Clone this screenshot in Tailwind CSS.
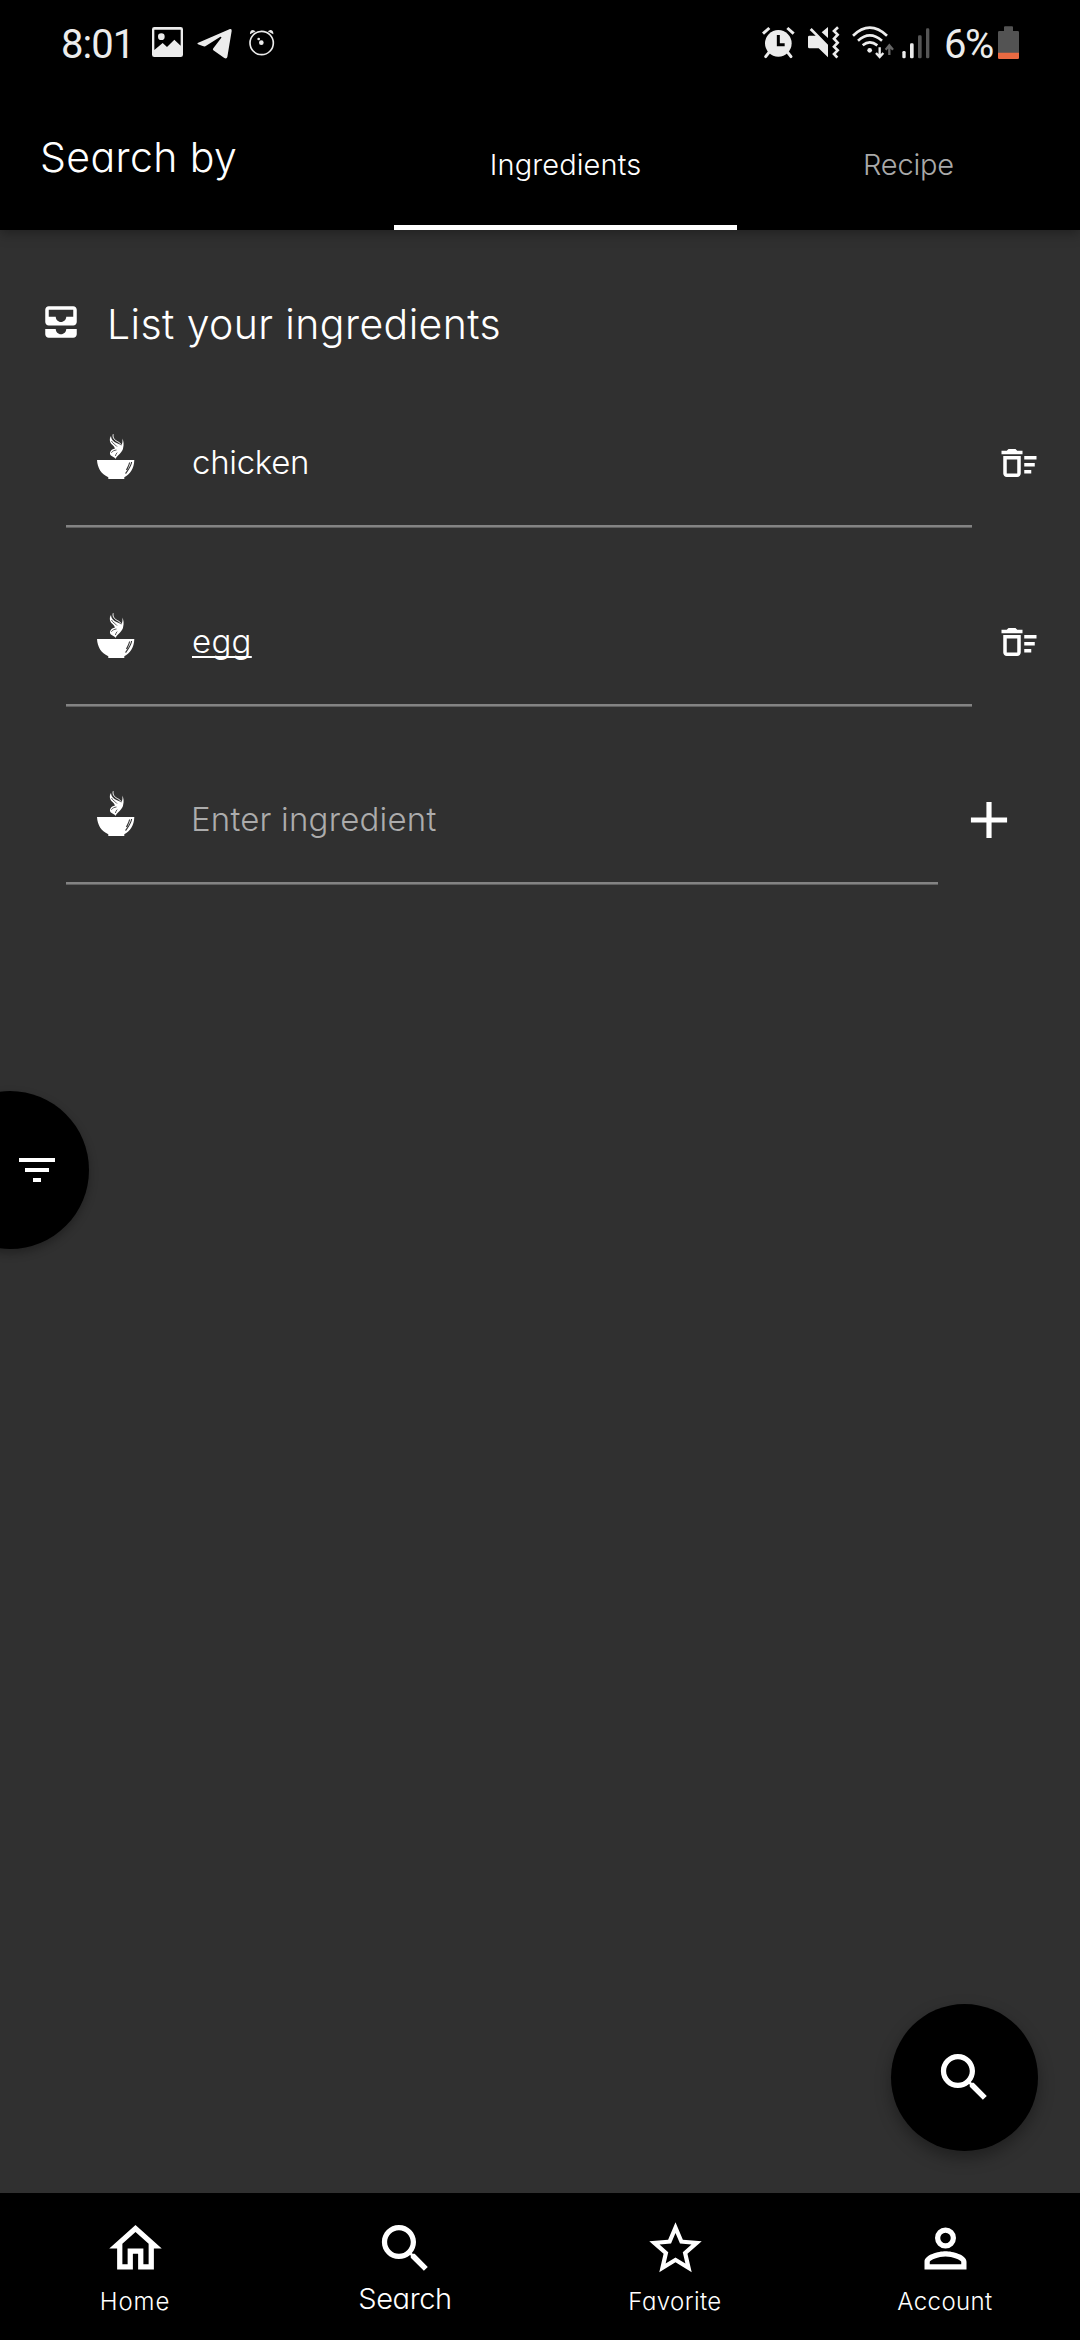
<!DOCTYPE html>
<html lang="en">
<head>
<meta charset="utf-8">
<title>Search by ingredients</title>
<script src="https://cdn.jsdelivr.net/npm/@tailwindcss/browser@4"></script>
</head>
<body class="bg-[#303030]">
<svg class="hidden">
  <symbol id="bowl" viewBox="0 0 38 46">
    <path d="M0 26H37.3C37 35 33 40 27.3 43.200V45H11.300V43.200C4 40 .5 34 0 26Z"/>
    <path d="M34.600 28C34 32.500 31 36 28.600 39.600M32.600 28.500C32 32 30.500 34 29.500 36" fill="none" stroke="#303030" stroke-width="1.100"/>
    <path d="M18.600 25C18 23 14 22.500 13.200 20.500C12.500 18.500 13.500 15.500 18 14.500C17 11.500 14 10.500 13.200 8C12.500 5.500 12.800 3.500 14 2C14.200 5 15.500 6.500 17.500 8C20 10 22.500 9.500 24.300 11.500C25.500 9 26 7 25 4.500C27 7 26.800 11 26.200 13.500C26 18.500 20 21 18.600 25Z"/>
    <path d="M16.200 .3C15.500 4 17.500 6 20.500 7.600C22.500 8.600 23.500 9.500 24 10.500" fill="none" stroke="currentColor" stroke-width="1"/>
    <path d="M14.400 18.800C15.500 16.800 17.500 16.300 19.500 16M18.400 22C18.600 20.500 19.400 19.600 20.200 18.600M14.500 7C15.500 9.500 18.500 10.500 20 12.600" fill="none" stroke="#303030" stroke-width=".8"/>
  </symbol>
  <symbol id="sweep" viewBox="0 0 24 24"><path d="M15 16h4v2h-4zm0-8h7v2h-7zm0 4h6v2h-6zM3 18c0 1.100.9 2 2 2h6c1.100 0 2-.9 2-2V8H3v10zm2-8h6v8H5v-8zm5-6H6L5 5H2v2h12V5h-3z"/></symbol>
  <symbol id="search" viewBox="0 0 24 24"><path d="M15.500 14h-.79l-.28-.27C15.410 12.590 16 11.110 16 9.500 16 5.910 13.090 3 9.500 3S3 5.910 3 9.500 5.910 16 9.500 16c1.610 0 3.090-.59 4.230-1.570l.27.28v.79l5 4.990L20.490 19l-4.990-5zm-6 0C7.010 14 5 11.990 5 9.500S7.010 5 9.500 5 14 7.010 14 9.500 11.990 14 9.500 14z"/></symbol>
</svg>

<div class="relative flex h-[2340px] w-[1080px] flex-col overflow-hidden bg-[#303030] font-['Inter','Noto_Sans',sans-serif] font-light text-white [font-feature-settings:'cv11']">

  <header class="z-10 flex h-[230px] shrink-0 flex-col bg-black shadow-[0_3px_12px_rgba(0,0,0,0.35)]">
    <div class="flex h-[84px] items-start justify-between pt-[25px] pr-[61px] pl-[61px] font-['Roboto',sans-serif] font-normal text-[#ececec]">
      <div class="flex items-start">
        <span class="w-[91px] pt-px text-[40px] leading-[38px] tracking-[-1px]">8:01</span>
        <svg class="h-[35px] w-[31px]" viewBox="336 75 93 105" fill="#ececec"><path fill-rule="evenodd" d="M343 81H422Q429 81 429 88V164Q429 171 422 171H343Q336 171 336 164V88Q336 81 343 81ZM343 89V150L368 129L381 141L403 119L422 137V89Z"/><circle cx="364" cy="110" r="10"/></svg>
        <svg class="ml-[14px] h-[35px] w-[35px]" viewBox="471 75 105 105" fill="#ececec"><path d="M473 129L570 87Q576 86 575 93L562 171Q560 178 553 174L520 151Q517 148 520 145L544 113Q545 109 540 111L496 139Q492 140 488 138L474 133Q471 131 473 129Z"/></svg>
        <svg class="ml-[17px] h-[35px] w-[26px]" viewBox="626 75 78 105"><circle cx="664" cy="129" r="35" fill="none" stroke="#ececec" stroke-width="5"/><path d="M629 103Q628 91 638 90L646 94ZM699 103Q700 91 690 90L682 94Z" fill="#ececec"/><circle cx="663" cy="128" r="7" fill="#ececec"/><circle cx="655" cy="117" r="4" fill="#ececec"/></svg>
      </div>
      <div class="flex items-start">
        <svg class="h-[35px] w-[33px]" viewBox="65 75 99 105" fill="none" stroke="#ececec"><circle cx="114" cy="130" r="40" fill="#ececec" stroke="none"/><path d="M68 101L87 84M160 101L141 84" stroke-width="9"/><path d="M86 157L76 170M142 157L152 170" stroke-width="9" stroke-linecap="round"/><path d="M114 105V134H133" stroke="#000" stroke-width="9"/></svg>
        <svg class="ml-[13px] h-[35px] w-[32px]" viewBox="202 75 96 105" fill="#ececec"><path d="M213 84L262 134V172L234 145H206Q202 145 202 140V111Q202 107 206 107H225L207 90ZM262 81V114L243 97Z"/><path d="M292 82L280 93L291 104L280 116L291 128L280 140L291 151L280 162L290 173" fill="none" stroke="#ececec" stroke-width="8"/></svg>
        <svg class="ml-[12px] h-[35px] w-[42px]" viewBox="332 75 126 105" fill="none" stroke="#ececec" stroke-width="8"><path d="M335 107Q385 59 437 107M350 122Q385 90 422 122M364 136Q385 118 408 136"/><circle cx="385" cy="151" r="7" fill="#ececec" stroke="none"/><path d="M415 142V170M404 159L415 171L426 159" stroke-width="7"/><path d="M444 165V140M433 149L444 136L455 149" stroke="#666" stroke-width="7"/></svg>
        <svg class="ml-[8px] h-[35px] w-[28px]" viewBox="482 75 84 105" fill="#ececec"><rect x="483" y="153" width="10" height="22" rx="4"/><rect x="506" y="130" width="11" height="45" rx="4"/><rect x="530" y="106" width="11" height="69" rx="4" fill="#555"/><rect x="554" y="85" width="10" height="90" rx="4" fill="#555"/></svg>
        <span class="ml-[14px] w-[54px] pt-px text-[40px] leading-[38px] tracking-[-1.600px]">6%</span>
        <svg class="h-[35px] w-[21px]" viewBox="774 75 63 105"><path d="M792 82Q792 79 795 79H816Q819 79 819 82V93H833Q837 93 837 97V160H774V97Q774 93 778 93H792Z" fill="#535353"/><path d="M774 158H837V173Q837 177 833 177H778Q774 177 774 173Z" fill="#ea6a42"/></svg>
      </div>
    </div>
    <div class="flex h-[146px]">
      <h1 class="w-[394px] pl-[40px] text-[41px] leading-[146px] tracking-[0.4px]">Search by</h1>
      <nav class="flex flex-1 text-center text-[29px]">
        <a class="flex h-full w-[343px] flex-col justify-end border-b-[5px] border-white leading-[127px] tracking-[0.1px]"><span class="-mb-[3px]">Ingredients</span></a>
        <a class="flex h-full w-[343px] flex-col justify-end border-b-[5px] border-transparent leading-[127px] tracking-[-0.2px] text-[#a9a9a9]"><span class="-mb-[3px]">Recipe</span></a>
      </nav>
    </div>
  </header>

  <main class="flex flex-1 flex-col">
    <div class="mt-[63px] flex h-[60px] items-center pl-[40px]">
      <svg class="-mt-[2px] h-[42px] w-[42px]" viewBox="0 0 24 24" fill="currentColor"><path d="M19 3H5c-1.100 0-2 .9-2 2v7c0 1.100.9 2 2 2h14c1.100 0 2-.9 2-2V5c0-1.100-.9-2-2-2zm0 6h-4c0 1.620-1.380 3-3 3s-3-1.380-3-3H5V5h14v4zm-4 7h6v3c0 1.100-.9 2-2 2H5c-1.100 0-2-.9-2-2v-3h6c0 1.660 1.340 3 3 3s3-1.340 3-3z"/></svg>
      <h2 class="ml-[25px] pt-px text-[41px] leading-[60px] tracking-[0.4px]">List your ingredients</h2>
    </div>

    <div class="mt-[44px] flex flex-col gap-12 pl-[66px]">
      <div class="flex h-[131px]">
        <div class="flex w-[906px] flex-col">
          <div class="flex h-[130px] items-center border-b-2 border-[#838383]">
            <svg class="-mt-[8px] ml-[31px] h-[46px] w-[38px]" fill="currentColor"><use href="#bowl"/></svg>
            <span class="ml-[57px] pt-[3px] text-[33px] tracking-[-0.3px]">chicken</span>
          </div>
          <div class="h-px bg-[#606060]"></div>
        </div>
        <svg class="mt-[45px] ml-[26px] h-[42px] w-[42px]" fill="currentColor"><use href="#sweep"/></svg>
      </div>
      <div class="flex h-[131px]">
        <div class="flex w-[906px] flex-col">
          <div class="flex h-[130px] items-center border-b-2 border-[#838383]">
            <svg class="-mt-[8px] ml-[31px] h-[46px] w-[38px]" fill="currentColor"><use href="#bowl"/></svg>
            <span class="ml-[57px] pt-[3px] text-[33px] tracking-[0.3px] underline decoration-2 underline-offset-[3px] [text-decoration-skip-ink:none]">egg</span>
          </div>
          <div class="h-px bg-[#606060]"></div>
        </div>
        <svg class="mt-[45px] ml-[26px] h-[42px] w-[42px]" fill="currentColor"><use href="#sweep"/></svg>
      </div>
      <div class="-mt-px flex h-[131px]">
        <div class="flex w-[872px] flex-col">
          <div class="flex h-[130px] items-center border-b-2 border-[#838383]">
            <svg class="-mt-[8px] ml-[31px] h-[46px] w-[38px]" fill="currentColor"><use href="#bowl"/></svg>
            <span class="ml-[56px] pt-[3px] text-[33px] tracking-[0.2px] text-[#acacac]">Enter ingredient</span>
          </div>
          <div class="h-px bg-[#606060]"></div>
        </div>
        <svg class="mt-[35px] ml-[20px] h-[62px] w-[62px]" viewBox="0 0 24 24" fill="currentColor"><path d="M19 13h-6v6h-2v-6H5v-2h6V5h2v6h6v2z"/></svg>
      </div>
    </div>
  </main>

  <button class="absolute top-[1091px] -left-[69px] flex h-[158px] w-[158px] items-center justify-center rounded-full bg-black shadow-[0_4px_10px_rgba(0,0,0,0.3)]">
    <svg class="ml-[54px] h-[48px] w-[48px]" viewBox="0 0 24 24" fill="currentColor"><path d="M10 18h4v-2h-4v2zM3 6v2h18V6H3zm3 7h12v-2H6v2z"/></svg>
  </button>
  <button class="absolute top-[2004px] left-[891px] flex h-[147px] w-[147px] items-center justify-center rounded-full bg-black shadow-[0_7px_16px_rgba(0,0,0,0.35)]">
    <svg class="h-[63px] w-[63px]" fill="currentColor"><use href="#search"/></svg>
  </button>

  <nav class="grid h-[147px] shrink-0 grid-cols-4 bg-black pt-[24px] text-center text-[24px]">
    <a class="flex flex-col items-center">
      <svg class="h-[63px] w-[63px]" viewBox="0 0 24 24" fill="currentColor"><path d="M12 5.690l5 4.500V18h-2v-6H9v6H7v-7.810l5-4.500M12 3L2 12h3v8h6v-6h2v6h6v-8h3L12 3z"/></svg>
      <span class="mt-[7px] leading-[30px] tracking-[0.9px]">Home</span>
    </a>
    <a class="flex flex-col items-center">
      <svg class="h-[63px] w-[63px]" fill="currentColor"><use href="#search"/></svg>
      <span class="mt-[4px] text-[29px] leading-[30px] tracking-[-0.4px]">Search</span>
    </a>
    <a class="flex flex-col items-center">
      <svg class="h-[63px] w-[63px]" viewBox="0 0 24 24" fill="currentColor"><path d="M22 9.240l-7.190-.62L12 2 9.190 8.630 2 9.240l5.460 4.730L5.820 21 12 17.270 18.180 21l-1.630-7.030L22 9.240zM12 15.400l-3.760 2.270 1-4.280-3.320-2.880 4.380-.38L12 6.100l1.710 4.040 4.380.38-3.320 2.880 1 4.280L12 15.400z"/></svg>
      <span class="mt-[7px] leading-[30px] tracking-[0.4px]">Favorite</span>
    </a>
    <a class="flex flex-col items-center">
      <svg class="h-[63px] w-[63px]" viewBox="0 0 24 24" fill="currentColor"><path fill-rule="evenodd" d="M12 4a4 4 0 1 0 0 8a4 4 0 1 0 0-8zm0 2a2 2 0 1 1 0 4a2 2 0 1 1 0-4zM12 13c-2.670 0-8 1.340-8 4v3h16v-3c0-2.660-5.330-4-8-4zm6 5H6v-.99c.2-.72 3.300-2.010 6-2.010s5.800 1.290 6 2v1z"/></svg>
      <span class="mt-[7px] leading-[30px] tracking-[0.4px]">Account</span>
    </a>
  </nav>
</div>
</body>
</html>
